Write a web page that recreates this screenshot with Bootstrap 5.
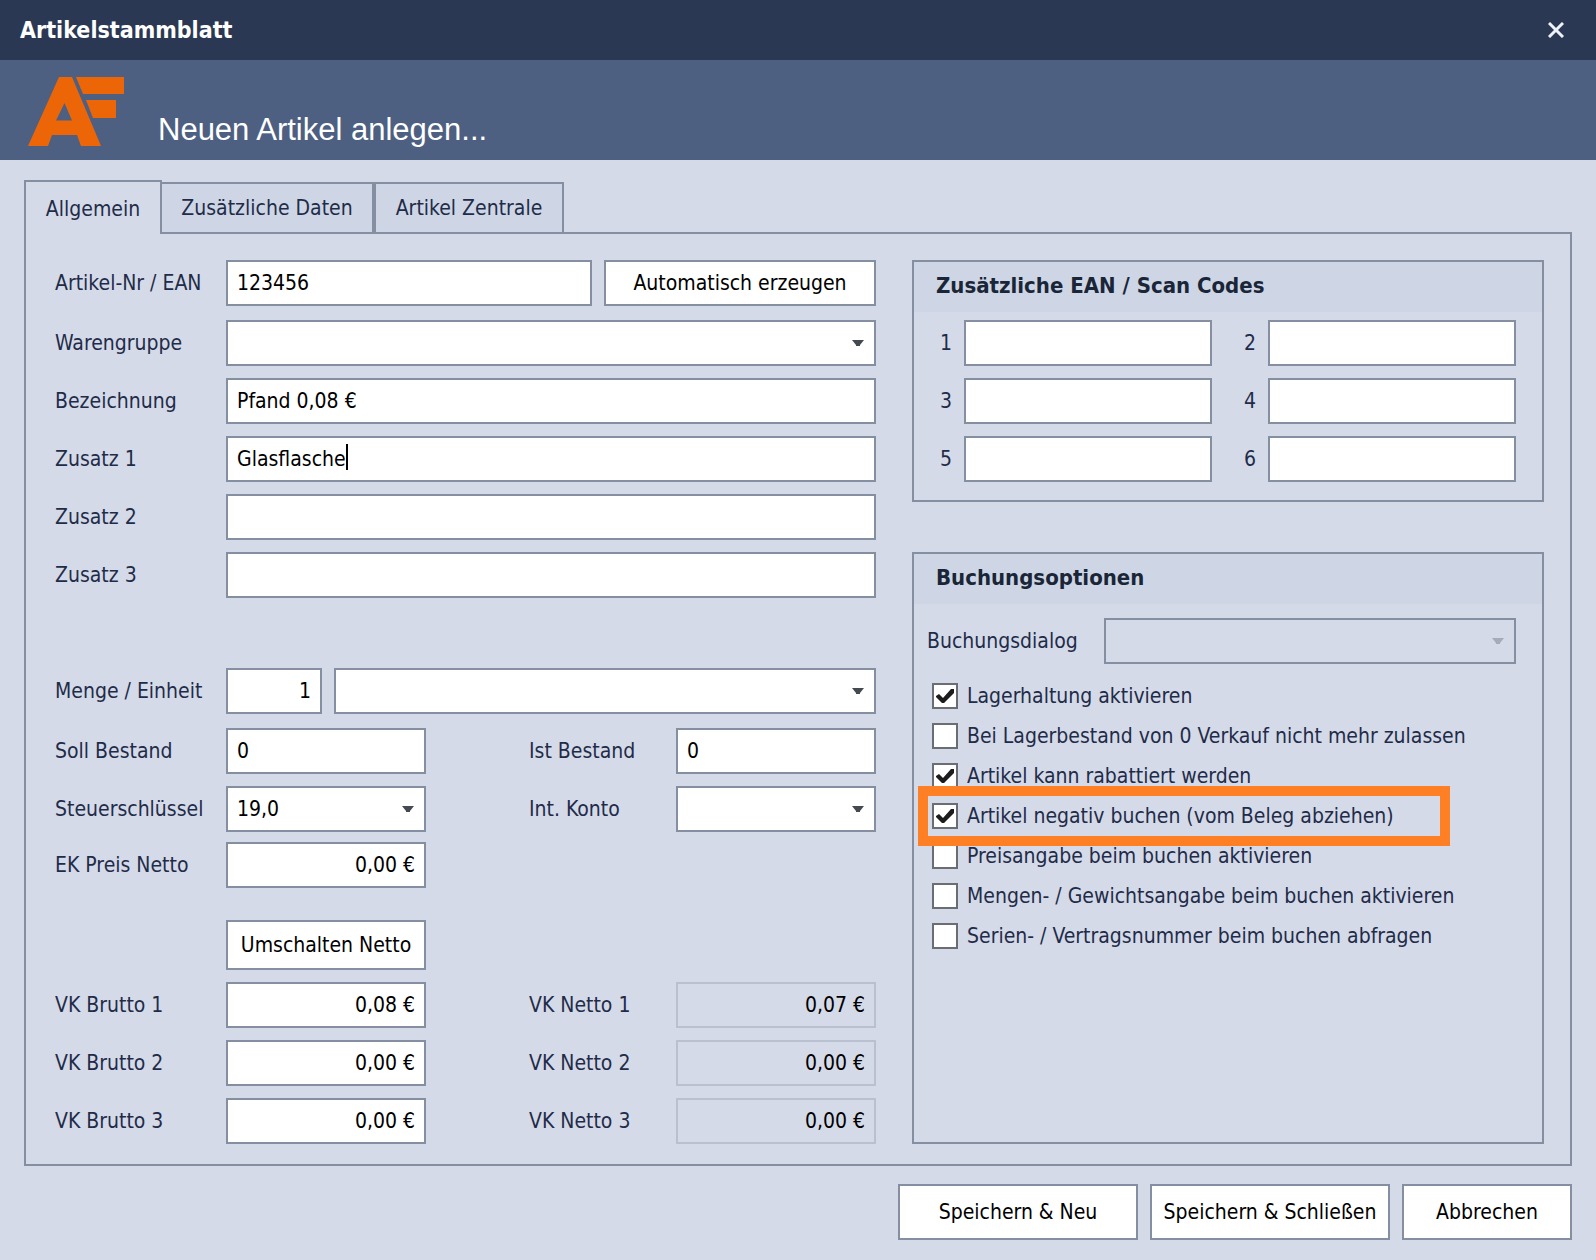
<!DOCTYPE html>
<html lang="de">
<head>
<meta charset="utf-8">
<meta name="viewport" content="width=device-width, initial-scale=1">
<title>Artikelstammblatt</title>
<link href="https://cdn.jsdelivr.net/npm/bootstrap@5.3.0/dist/css/bootstrap.min.css" rel="stylesheet">
<style>
  :root {
    --line: #8490a2;
    --surface: #d5dae8;
    --surface-head: #ced6e5;
    --ink: #1f2c49;
  }
  body {
    background: var(--surface);
    color: var(--ink);
    font-family: "DejaVu Sans Condensed", "DejaVu Sans", Tahoma, sans-serif;
    font-size: 21px;
    line-height: 26px;
  }
  .title-bar { height: 60px; background: #2a3854; padding: 0 32px 0 20px; }
  .title-bar h1 { font-size: 23px; line-height: 26px; }
  .close-btn { width: 16px; height: 16px; }
  .banner { height: 100px; background: #4e6081; padding: 0 28px 13px; gap: 33px; }
  .banner h2 { font: 400 31px/34px "Liberation Sans", Arial, sans-serif; }
  .sheet { padding: 20px 24px; }

  .nav-tabs { border: 0; margin-bottom: -2px; --bs-nav-tabs-border-width: 0; }
  .nav-tabs .nav-link {
    height: 52px; padding: 0 18px; color: var(--ink); border: 2px solid var(--line);
    border-radius: 0; background: var(--surface-head); margin: 0; line-height: 48px;
  }
  .nav-tabs .nav-link.active {
    height: 54px; min-width: 138px; line-height: 54px; color: var(--ink);
    border-color: var(--line); border-bottom: 0; background: var(--surface);
  }
  .tab-second { min-width: 212px; }
  .nav-tabs .nav-link.tab-second { border-left: 0; }
  .tab-third { min-width: 190px; }

  .tab-panel {
    border: 2px solid var(--line); padding: 26px 26px 20px 29px;
    display: grid; grid-template-columns: 821fr 632fr; column-gap: 36px;
  }
  .line { display: grid; grid-template-columns: 171px minmax(0, 1fr); align-items: center; }
  .line-double { grid-template-columns: 171px minmax(0, 1fr) 250px minmax(0, 1fr); }
  .label-second { padding-left: 103px; }
  .pair { display: flex; gap: 12px; }
  .stack { display: flex; flex-direction: column; gap: 12px; }
  .article-no { margin-bottom: 14px; }
  .units { margin: 70px 0 14px; }
  .purchase { margin: 10px 0 32px; }

  .form-control, .form-select {
    height: 46px; border: 2px solid var(--line); border-radius: 0; padding: 0 9px;
    font-size: 21px; line-height: 26px; color: #000; background-color: #fff;
  }
  .form-select {
    padding-right: 34px;
    background-image: url("data:image/svg+xml,%3Csvg xmlns='http://www.w3.org/2000/svg' viewBox='0 0 12 6'%3E%3Cpath d='M0 0h12L8 5v1H4V5z' fill='%23444a50'/%3E%3C/svg%3E");
    background-size: 12px 6px; background-position: right 10px center;
  }
  .form-select:disabled {
    background-color: transparent; opacity: 1; border-color: var(--line);
    background-image: url("data:image/svg+xml,%3Csvg xmlns='http://www.w3.org/2000/svg' viewBox='0 0 12 6'%3E%3Cpath d='M0 0h12L8 5v1H4V5z' fill='%23a4abba'/%3E%3C/svg%3E");
  }
  .form-control[readonly] { background: transparent; border-color: #b9c0d0; }
  .qty { width: 96px; }
  .caret { position: absolute; left: 120px; top: 8px; width: 2px; height: 26px; background: #000; }

  .btn-flat {
    --bs-btn-color: #000; --bs-btn-bg: #fff; --bs-btn-border-color: var(--line);
    --bs-btn-hover-bg: #eef1f7; --bs-btn-hover-border-color: var(--line);
    --bs-btn-border-width: 2px; --bs-btn-border-radius: 0;
    --bs-btn-font-size: 21px; --bs-btn-line-height: 26px;
    --bs-btn-padding-x: 6px; --bs-btn-padding-y: 0;
    height: 46px; white-space: nowrap;
  }
  .btn-generate { width: 272px; }
  .btn-switch { height: 50px; }
  .btn-foot { height: 56px; width: 240px; }
  .btn-cancel { width: 170px; }

  .side { gap: 50px; }
  .box { border: 2px solid var(--line); }
  .box-title {
    height: 50px; background: var(--surface-head); padding: 0 22px; margin: 0;
    font-size: 22px; line-height: 48px; font-weight: 700; color: #1a2638;
  }
  .codes { display: grid; grid-template-columns: 50px minmax(0, 1fr) 56px minmax(0, 1fr);
    row-gap: 12px; align-items: center; padding: 8px 26px 18px 0; }
  .codes label { text-align: right; padding-right: 12px; }

  .dialog-line { padding: 14px 26px 12px 13px; }
  .dialog-line label { width: 177px; flex: none; }
  .option { height: 40px; display: flex; align-items: center; gap: 9px; padding-left: 18px; }
  .option .form-check-input {
    width: 26px; height: 26px; margin: 0; flex: none; border: 2px solid #6a6d73; border-radius: 0;
    background-color: #fff;
  }
  .option .form-check-input:checked {
    background-image: url("data:image/svg+xml,%3Csvg xmlns='http://www.w3.org/2000/svg' viewBox='0 0 22 22'%3E%3Cpath d='M2 11l3-2 4 4L17 4h3v4L10 18H8L2 12z' fill='%231c1c1c'/%3E%3C/svg%3E");
    background-size: 22px 22px;
  }
  .highlight { position: absolute; left: 4px; top: -10px; width: 532px; height: 60px;
    border: 10px solid #ff8024; pointer-events: none; z-index: 1; }
  .foot { gap: 12px; margin-top: 18px; }
</style>
<script src="https://cdn.jsdelivr.net/npm/bootstrap@5.3.0/dist/js/bootstrap.bundle.min.js" defer></script>
</head>
<body>
<header>
  <div class="title-bar d-flex align-items-center justify-content-between text-white">
    <h1 class="m-0 fw-bold">Artikelstammblatt</h1>
    <button type="button" class="close-btn btn p-0 border-0 d-flex" aria-label="Schließen">
      <svg width="16" height="16" viewBox="0 0 16 16" fill="none" stroke="#eef2f8" stroke-width="3"><path d="M1 1l14 14M15 1L1 15"/></svg>
    </button>
  </div>
  <div class="banner d-flex align-items-end text-white">
    <svg width="97" height="70" viewBox="0 0 97 70" fill="#ec6608" aria-hidden="true">
      <path fill-rule="evenodd" d="M31 0H44L73 69H53L49 58H24L20 69H0ZM36.500 26L28 43.500H44Z"/>
      <path d="M48 0H96V17H55Z"/>
      <path d="M58 23H88V41H65Z"/>
    </svg>
    <h2 class="m-0">Neuen Artikel anlegen...</h2>
  </div>
</header>

<main class="sheet">
  <ul class="nav nav-tabs align-items-end" role="tablist">
    <li class="nav-item"><button type="button" class="nav-link active" role="tab" aria-selected="true">Allgemein</button></li>
    <li class="nav-item"><button type="button" class="nav-link tab-second" role="tab" aria-selected="false">Zusätzliche Daten</button></li>
    <li class="nav-item"><button type="button" class="nav-link tab-third" role="tab" aria-selected="false">Artikel Zentrale</button></li>
  </ul>

  <form class="tab-panel">
    <div class="d-flex flex-column">
      <div class="line article-no">
        <label for="ean">Artikel-Nr / EAN</label>
        <div class="pair">
          <input id="ean" class="form-control" value="123456">
          <button type="button" class="btn btn-flat btn-generate flex-shrink-0">Automatisch erzeugen</button>
        </div>
      </div>
      <div class="stack">
        <div class="line"><label for="gruppe">Warengruppe</label><select id="gruppe" class="form-select"><option></option></select></div>
        <div class="line"><label for="bez">Bezeichnung</label><input id="bez" class="form-control" value="Pfand 0,08 €"></div>
        <div class="line"><label for="z1">Zusatz 1</label>
          <div class="position-relative"><input id="z1" class="form-control" value="Glasflasche"><span class="caret"></span></div>
        </div>
        <div class="line"><label for="z2">Zusatz 2</label><input id="z2" class="form-control"></div>
        <div class="line"><label for="z3">Zusatz 3</label><input id="z3" class="form-control"></div>
      </div>

      <div class="line units">
        <label for="menge">Menge / Einheit</label>
        <div class="pair">
          <input id="menge" class="form-control qty flex-shrink-0 text-end" value="1">
          <select class="form-select" aria-label="Einheit"><option></option></select>
        </div>
      </div>
      <div class="stack">
        <div class="line line-double">
          <label for="soll">Soll Bestand</label><input id="soll" class="form-control" value="0">
          <label for="ist" class="label-second">Ist Bestand</label><input id="ist" class="form-control" value="0">
        </div>
        <div class="line line-double">
          <label for="steuer">Steuerschlüssel</label><select id="steuer" class="form-select"><option>19,0</option></select>
          <label for="konto" class="label-second">Int. Konto</label><select id="konto" class="form-select"><option></option></select>
        </div>
      </div>
      <div class="line line-double purchase">
        <label for="ek">EK Preis Netto</label><input id="ek" class="form-control text-end" value="0,00 €">
      </div>
      <div class="stack">
        <div class="line line-double"><span></span><button type="button" class="btn btn-flat btn-switch">Umschalten Netto</button></div>
        <div class="line line-double">
          <label for="b1">VK Brutto 1</label><input id="b1" class="form-control text-end" value="0,08 €">
          <label for="n1" class="label-second">VK Netto 1</label><input id="n1" class="form-control text-end" value="0,07 €" readonly>
        </div>
        <div class="line line-double">
          <label for="b2">VK Brutto 2</label><input id="b2" class="form-control text-end" value="0,00 €">
          <label for="n2" class="label-second">VK Netto 2</label><input id="n2" class="form-control text-end" value="0,00 €" readonly>
        </div>
        <div class="line line-double">
          <label for="b3">VK Brutto 3</label><input id="b3" class="form-control text-end" value="0,00 €">
          <label for="n3" class="label-second">VK Netto 3</label><input id="n3" class="form-control text-end" value="0,00 €" readonly>
        </div>
      </div>
    </div>

    <div class="d-flex flex-column side">
      <section class="box">
        <h3 class="box-title">Zusätzliche EAN / Scan Codes</h3>
        <div class="codes">
          <label for="c1">1</label><input id="c1" class="form-control"><label for="c2">2</label><input id="c2" class="form-control">
          <label for="c3">3</label><input id="c3" class="form-control"><label for="c4">4</label><input id="c4" class="form-control">
          <label for="c5">5</label><input id="c5" class="form-control"><label for="c6">6</label><input id="c6" class="form-control">
        </div>
      </section>
      <section class="box flex-grow-1">
        <h3 class="box-title">Buchungsoptionen</h3>
        <div class="dialog-line d-flex align-items-center">
          <label for="dialog">Buchungsdialog</label>
          <select id="dialog" class="form-select" disabled><option></option></select>
        </div>
        <div class="option"><input class="form-check-input" type="checkbox" id="o1" checked><label for="o1">Lagerhaltung aktivieren</label></div>
        <div class="option"><input class="form-check-input" type="checkbox" id="o2"><label for="o2">Bei Lagerbestand von 0 Verkauf nicht mehr zulassen</label></div>
        <div class="option"><input class="form-check-input" type="checkbox" id="o3" checked><label for="o3">Artikel kann rabattiert werden</label></div>
        <div class="option position-relative"><input class="form-check-input" type="checkbox" id="o4" checked><label for="o4">Artikel negativ buchen (vom Beleg abziehen)</label><span class="highlight"></span></div>
        <div class="option"><input class="form-check-input" type="checkbox" id="o5"><label for="o5">Preisangabe beim buchen aktivieren</label></div>
        <div class="option"><input class="form-check-input" type="checkbox" id="o6"><label for="o6">Mengen- / Gewichtsangabe beim buchen aktivieren</label></div>
        <div class="option"><input class="form-check-input" type="checkbox" id="o7"><label for="o7">Serien- / Vertragsnummer beim buchen abfragen</label></div>
      </section>
    </div>
  </form>

  <div class="d-flex justify-content-end foot">
    <button type="button" class="btn btn-flat btn-foot">Speichern &amp; Neu</button>
    <button type="button" class="btn btn-flat btn-foot">Speichern &amp; Schließen</button>
    <button type="button" class="btn btn-flat btn-foot btn-cancel">Abbrechen</button>
  </div>
</main>
</body>
</html>
